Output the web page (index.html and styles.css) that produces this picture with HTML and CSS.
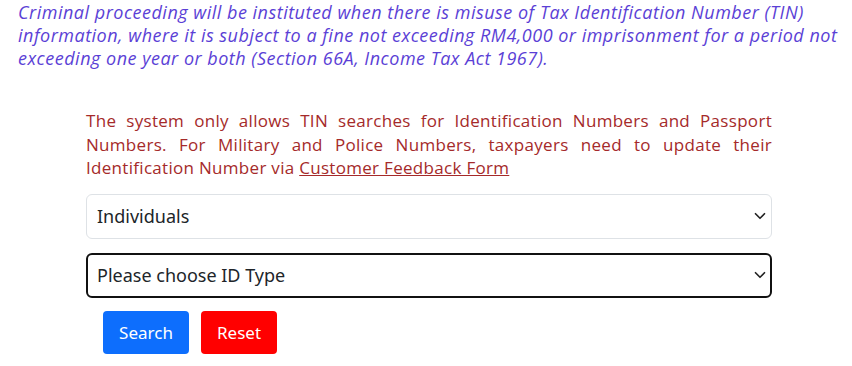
FILE: index.html
```html
<!DOCTYPE html>
<html>
<head>
<meta charset="utf-8">
<link rel="stylesheet" href="styles.css">
</head>
<body>
<div class="page">
  <p class="warning">Criminal proceeding will be instituted when there is misuse of Tax Identification Number (TIN) information, where it is subject to a fine not exceeding RM4,000 or imprisonment for a period not exceeding one year or both (Section 66A, Income Tax Act 1967).</p>
  <div class="form">
    <p class="notice">
      <span class="line full">The system only allows TIN searches for Identification Numbers and Passport</span>
      <span class="line full">Numbers. For Military and Police Numbers, taxpayers need to update their</span>
      <span class="line"><span>Identification Number via </span><a href="#">Customer Feedback Form</a></span>
    </p>
    <div class="select">
      <span>Individuals</span>
      <svg class="chev" width="12" height="12" viewBox="0 0 16 16"><path d="M2 5l6 6 6-6" fill="none" stroke="#222" stroke-width="2.2" stroke-linecap="round" stroke-linejoin="round"/></svg>
    </div>
    <div class="select focus">
      <span>Please choose ID Type</span>
      <svg class="chev" width="12" height="12" viewBox="0 0 16 16"><path d="M2 5l6 6 6-6" fill="none" stroke="#222" stroke-width="2.2" stroke-linecap="round" stroke-linejoin="round"/></svg>
    </div>
    <div class="buttons">
      <button class="btn search">Search</button>
      <button class="btn reset">Reset</button>
    </div>
  </div>
</div>
</body>
</html>
```
FILE: styles.css
```css
html, body { margin: 0; padding: 0; background: #fff; }
.page { padding: 1px 4px 0 18px; }
.warning {
  margin: 0;
  font-family: "Open Sans", "Liberation Sans", sans-serif;
  font-style: italic;
  font-size: 18px;
  line-height: 23px;
  letter-spacing: 0.5px;
  color: #5b3fd6;
}
.form { width: 686px; margin: 39px 0 0 68px; }
.notice {
  margin: 0;
  font-family: "Open Sans", "Liberation Sans", sans-serif;
  font-size: 17px;
  line-height: 23.5px;
  color: #a52a2a;
  letter-spacing: 0.3px;
}
.line { display: block; }
.line.full { text-align: justify; text-align-last: justify; }
.notice a { color: #a52a2a; text-decoration: underline; }
.select {
  margin-top: 14px;
  height: 45px;
  box-sizing: border-box;
  border: 1px solid #dee2e6;
  border-radius: 6px;
  display: flex;
  align-items: center;
  justify-content: space-between;
  padding: 0 5px 0 10px;
  font-family: "Noto Sans", "Liberation Sans", sans-serif;
  font-size: 18px;
  color: #212529;
}
.select.focus { border: 2px solid #111; padding-left: 9px; padding-right: 4px; }
.buttons { display: flex; gap: 12px; margin-top: 13px; padding-left: 17px; }
.btn {
  height: 43px;
  border: none;
  border-radius: 4px;
  color: #fff;
  font-family: "Noto Sans", "Liberation Sans", sans-serif;
  font-size: 17px;
  padding: 0 14px;
}
.search { background: #0d6efd; width: 86px; }
.reset { background: #ff0000; width: 76px; }
```
